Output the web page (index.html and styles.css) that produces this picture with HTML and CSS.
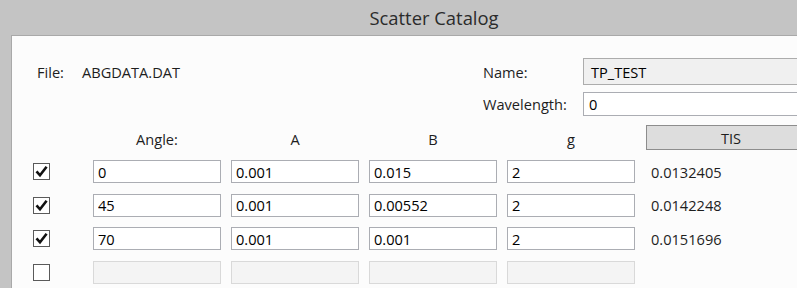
FILE: index.html
```html
<!DOCTYPE html>
<html lang="en">
<head>
<meta charset="UTF-8" />
<title>Scatter Catalog</title>
<link rel="stylesheet" href="styles.css">
</head>
<body>

<div class="window">
  <div class="titlebar">Scatter Catalog</div>

  <div class="panel">
    <div class="info">
      <span class="lbl">File:</span>
      <span class="lbl">ABGDATA.DAT</span>
      <span class="lbl">Name:</span>
      <div class="field combo">TP_TEST</div>
      <span></span>
      <span></span>
      <span class="lbl">Wavelength:</span>
      <input class="field" type="text" value="0" />
    </div>

    <div class="grid">
      <span></span>
      <span class="colhead">Angle:</span>
      <span class="colhead">A</span>
      <span class="colhead">B</span>
      <span class="colhead">g</span>
      <button class="tis">TIS</button>

      <span class="check"><svg viewBox="0 0 17 17" width="17" height="17"><path d="M3.5 8.3 L7 12.3 L13.6 3.8" fill="none" stroke="#111" stroke-width="2.6"/></svg></span>
      <input class="cell" value="0" />
      <input class="cell" value="0.001" />
      <input class="cell" value="0.015" />
      <input class="cell" value="2" />
      <span class="tisval">0.0132405</span>

      <span class="check"><svg viewBox="0 0 17 17" width="17" height="17"><path d="M3.5 8.3 L7 12.3 L13.6 3.8" fill="none" stroke="#111" stroke-width="2.6"/></svg></span>
      <input class="cell" value="45" />
      <input class="cell" value="0.001" />
      <input class="cell" value="0.00552" />
      <input class="cell" value="2" />
      <span class="tisval">0.0142248</span>

      <span class="check"><svg viewBox="0 0 17 17" width="17" height="17"><path d="M3.5 8.3 L7 12.3 L13.6 3.8" fill="none" stroke="#111" stroke-width="2.6"/></svg></span>
      <input class="cell" value="70" />
      <input class="cell" value="0.001" />
      <input class="cell" value="0.001" />
      <input class="cell" value="2" />
      <span class="tisval">0.0151696</span>

      <span class="check"></span>
      <input class="cell" value="" disabled />
      <input class="cell" value="" disabled />
      <input class="cell" value="" disabled />
      <input class="cell" value="" disabled />
      <span></span>
    </div>
  </div>
</div>

</body>
</html>
```

FILE: styles.css
```css
html, body { margin: 0; padding: 0; overflow: hidden; background: #c4c4c4; }
body { font-family: "Open Sans", "Noto Sans", sans-serif; font-size: 14.6px; color: #1e1e1e; }

.window { width: 797px; height: 288px; overflow: hidden; background: #c4c4c4; }
.titlebar { height: 35px; line-height: 35px; padding-left: 71px; text-align: center; font-size: 18.4px; color: #2b2b2b; }
.panel { margin-left: 11px; height: 253px; background: #fcfcfc; border-top: 1px solid #a9a9a9; border-left: 1px solid #a9a9a9; box-sizing: border-box; overflow: hidden; }

.info { display: grid; grid-template-columns: 45px 401px 100px 200px; grid-template-rows: 27px 24px; row-gap: 7px; padding: 22px 0 0 25px; align-items: center; }
.lbl { white-space: nowrap; }
.field { height: 100%; width: 230px; box-sizing: border-box; border: 1px solid #abadb3; background: #fff; font: inherit; color: #000; padding: 0 5px; margin: 0; outline: none; display: flex; align-items: center; }
.combo { background: #f0f0f0; border-color: #acacac; padding-left: 7px; }

.grid { display: grid; grid-template-columns: 50px repeat(4, 128px) 140px; grid-template-rows: 25px; grid-auto-rows: 23px; column-gap: 10px; row-gap: 10.4px; padding: 9px 0 0 21px; align-items: center; }
.colhead { text-align: center; padding-top: 2px; }
.tis { height: 25px; width: 170px; margin: 0 0 -1px 1px; border: 1px solid #8d8d8d; background: #dddddd; font: inherit; color: #1e1e1e; padding: 0; }
.grid .tis { align-self: start; }

.cell { height: 23px; width: 128px; box-sizing: border-box; margin: 0; border: 1px solid #abadb3; background: #fff; font: inherit; color: #000; padding: 0 4px; outline: none; }
.cell:disabled { background: #f4f4f4; border-color: #d9d9d9; }

.check { width: 17px; height: 17px; box-sizing: border-box; border: 1px solid #5a5a5a; background: #fff; display: block; }
.check svg { display: block; margin: -1px; }
.tisval { padding-left: 6px; }
```
